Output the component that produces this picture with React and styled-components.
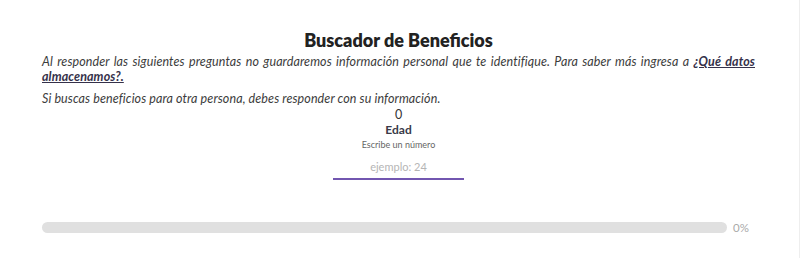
import React, { useState } from 'react'
import styled, { createGlobalStyle } from 'styled-components'

const GlobalStyle = createGlobalStyle`
    html, body {
        margin: 0;
        padding: 0;
        background: #fff;
    }
    body {
        font-family: Lato, "Open Sans", sans-serif;
        color: #333;
    }
`;

const Page = styled.div`
    box-sizing: border-box;
    width: 800px;
    height: 258px;
    padding: 29px 44px 0 42px;
    border-right: 1px solid #eeeeee;
`;

const Title = styled.h1`
    margin: 0 0 3px;
    text-align: center;
    font-size: 18px;
    line-height: 22px;
    font-weight: 800;
    color: #222;
`;

const Intro = styled.p`
    margin: ${props => props.$first ? '0 0 7px' : '0'};
    font-size: 12.5px;
    line-height: 15px;
    font-style: italic;
    text-align: justify;
    letter-spacing: 0.1px;
    color: #3c3c3c;
    a {
        color: #35314a;
        font-weight: 700;
        text-decoration: underline;
    }
`;

const Question = styled.div`
    display: flex;
    flex-direction: column;
    align-items: center;
    margin-top: 1px;
`;

const Counter = styled.div`
    font-size: 12.5px;
    line-height: 15px;
    color: #333;
`;

const Label = styled.label`
    font-size: 12px;
    line-height: 16px;
    font-weight: 700;
    color: #3a3a48;
`;

const Hint = styled.div`
    font-size: 9px;
    line-height: 14px;
    color: #666;
`;

const NumberInput = styled.input`
    box-sizing: border-box;
    width: 131px;
    margin-top: 4px;
    padding: 4px 0 5px;
    border: none;
    border-bottom: 2px solid #7256b0;
    outline: none;
    background: transparent;
    text-align: center;
    font-family: inherit;
    font-size: 11px;
    color: #333;
    &::placeholder {
        color: #b5b5b5;
    }
`;

const ProgressRow = styled.div`
    display: flex;
    align-items: center;
    gap: 6px;
    margin-top: 41px;
`;

const Track = styled.div`
    flex: 1;
    height: 11px;
    border-radius: 6px;
    background: #e0e0e0;
    overflow: hidden;
`;

const Fill = styled.div`
    height: 100%;
    background: #7256b0;
`;

const Percent = styled.span`
    width: 22px;
    font-size: 11.5px;
    color: #aaa;
`;

export default function App() {
    const [age, setAge] = useState('')
    const progress = 0

    return (
        <Page>
            <GlobalStyle />
            <Title>Buscador de Beneficios</Title>
            <Intro $first>
                Al responder las siguientes preguntas no guardaremos información personal que te identifique. Para saber más ingresa a <a href="#">¿Qué datos almacenamos?.</a>
            </Intro>
            <Intro>Si buscas beneficios para otra persona, debes responder con su información.</Intro>
            <Question>
                <Counter>0</Counter>
                <Label htmlFor="edad">Edad</Label>
                <Hint>Escribe un número</Hint>
                <NumberInput
                    id="edad"
                    type="text"
                    placeholder="ejemplo: 24"
                    value={age}
                    onChange={e => setAge(e.target.value)}
                />
            </Question>
            <ProgressRow>
                <Track>
                    <Fill style={{ width: `${progress}%` }} />
                </Track>
                <Percent>{progress}%</Percent>
            </ProgressRow>
        </Page>
    )
}
